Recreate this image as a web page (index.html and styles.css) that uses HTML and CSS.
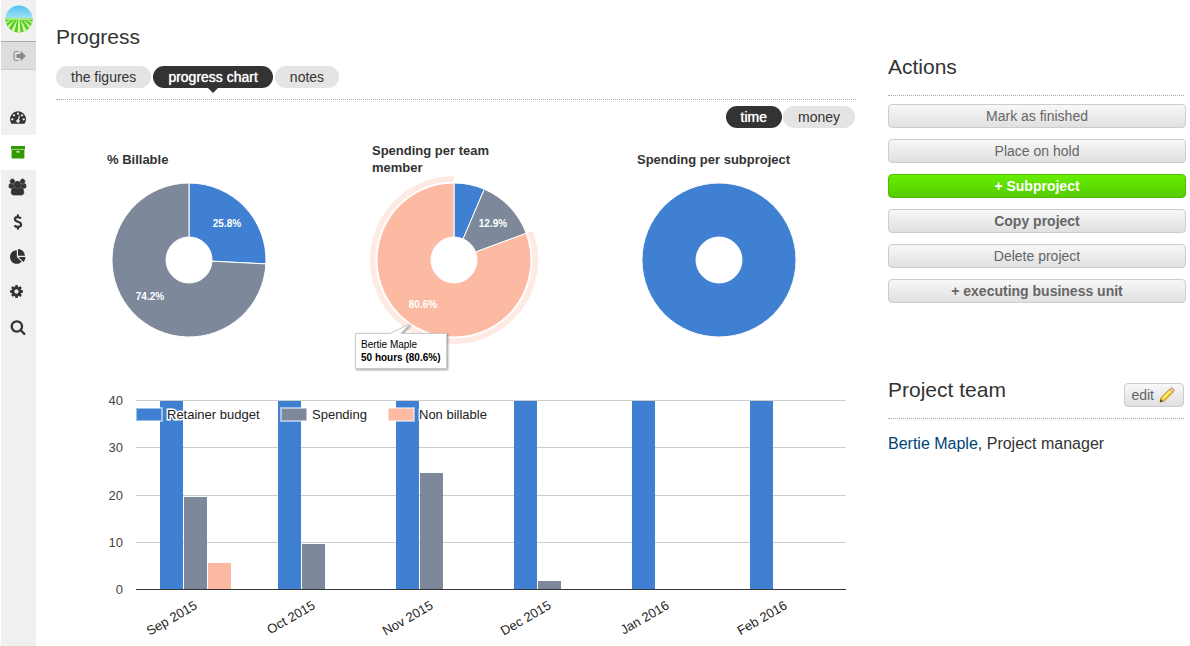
FILE: index.html
```html
<!DOCTYPE html>
<html lang="en">
<head>
<meta charset="utf-8">
<title>Progress</title>
<link rel="stylesheet" href="styles.css">
</head>
<body>
<div class="page">
  <nav class="sidebar" aria-label="Main">
    <a class="logo" href="#" aria-label="Home">
      <svg width="28" height="28" viewBox="0 0 28 28">
        <defs>
          <clipPath id="disc"><circle cx="14" cy="14" r="13.6"/></clipPath>
          <linearGradient id="sky" x1="0" y1="0" x2="0" y2="1"><stop offset="0" stop-color="#4fc3ef"/><stop offset="1" stop-color="#a5e3f6"/></linearGradient>
        </defs>
        <g clip-path="url(#disc)">
          <rect width="28" height="14" fill="url(#sky)"/>
          <rect y="13" width="28" height="15" fill="#4fd024"/>
          <path d="M0 13h28v2H0z" fill="#a9e67c"/>
          <g fill="#e0f6a8">
            <path d="M13.500 14 12.500 28h3L14.500 14z"/>
            <path d="M12.500 14 5 28h4z"/><path d="M15.500 14 19 28h4z"/>
            <path d="M10.500 14-2 25l3 2z"/><path d="M17.500 14 27 27l3-2z"/>
            <path d="M8 14-4 19v3z"/><path d="M20 14 32 19v3z"/>
          </g>
        </g>
      </svg>
    </a>
    <a class="exit" href="#" aria-label="Sign out">
      <svg width="14" height="14" viewBox="0 0 1792 1792"><path d="M704 1440q0 4 1 20t.5 26.500-3 23.500-10 19.500-20.500 6.500h-320q-119 0-203.500-84.500t-84.500-203.500v-704q0-119 84.500-203.500t203.500-84.500h320q13 0 22.500 9.500t9.500 22.500q0 4 1 20t.5 26.500-3 23.500-10 19.500-20.500 6.500h-320q-66 0-113 47t-47 113v704q0 66 47 113t113 47h312l11.500 1 11.500 3 8 5.500 7 9 2 13.500zm928-544q0 26-19 45l-544 544q-19 19-45 19t-45-19-19-45v-288h-448q-26 0-45-19t-19-45v-384q0-26 19-45t45-19h448v-288q0-26 19-45t45-19 45 19l544 544q19 19 19 45z"/></svg>
    </a>
    <div class="menu">
      <a href="#" aria-label="Dashboard"><svg width="16" height="16" viewBox="0 0 1792 1792"><path d="M384 1152q0-53-37.500-90.500t-90.500-37.500-90.500 37.500-37.500 90.500 37.500 90.500 90.500 37.500 90.500-37.500 37.500-90.500zm192-448q0-53-37.500-90.500t-90.500-37.500-90.500 37.500-37.500 90.500 37.500 90.500 90.500 37.500 90.500-37.500 37.500-90.500zm428 481l101-382q6-26-7.500-48.500t-38.500-29.500-48 6.500-30 39.500l-101 382q-60 5-107 43.500t-63 98.500q-20 77 20 146t117 89 146-20 89-117q16-60-6-117t-72-91zm660-33q0-53-37.500-90.500t-90.500-37.500-90.500 37.500-37.500 90.500 37.500 90.500 90.500 37.500 90.500-37.500 37.500-90.500zm-640-640q0-53-37.500-90.500t-90.500-37.500-90.500 37.500-37.500 90.500 37.500 90.500 90.500 37.500 90.500-37.500 37.500-90.500zm448 192q0-53-37.500-90.500t-90.500-37.500-90.500 37.500-37.500 90.500 37.500 90.500 90.500 37.500 90.500-37.500 37.500-90.500zm320 448q0 261-141 483-19 29-54 29h-1402q-35 0-54-29-141-221-141-483 0-182 71-348t191-286 286-191 348-71 348 71 286 191 191 286 71 348z"/></svg></a>
      <a class="current" href="#" aria-label="Projects"><svg width="16" height="16" viewBox="0 0 16 16"><path d="M1 2h14v3.500H1zM1.600 6h12.800v8.500H1.600zM6.500 7.300v1.200h3V7.300z" fill-rule="evenodd"/></svg></a>
      <a href="#" aria-label="Contacts"><svg class="heavy" width="17" height="16" viewBox="0 0 1920 1792"><path d="M593 896q-162 5-265 128h-134q-82 0-138-40.500t-56-118.500q0-353 124-353 6 0 43.500 21t97.500 42.500 119 21.500q67 0 133-23-5 37-5 66 0 139 81 256zm1071 637q0 120-73 189.500t-194 69.500h-874q-121 0-194-69.500t-73-189.500q0-53 3.500-103.500t14-109 26.500-108.500 43-97.500 62-81 85.500-53.500 111.500-20q10 0 43 21.500t73 48 107 48 135 21.500 135-21.500 107-48 73-48 43-21.500q61 0 111.500 20t85.500 53.500 62 81 43 97.500 26.500 108.500 14 109 3.500 103.500zm-1024-1277q0 106-75 181t-181 75-181-75-75-181 75-181 181-75 181 75 75 181zm704 384q0 159-112.500 271.500t-271.500 112.500-271.500-112.500-112.500-271.500 112.500-271.500 271.500-112.500 271.500 112.500 112.500 271.500zm576 225q0 78-56 118.500t-138 40.500h-134q-103-123-265-128 81-117 81-256 0-29-5-66 66 23 133 23 59 0 119-21.500t97.500-42.500 43.500-21q124 0 124 353zm-128-609q0 106-75 181t-181 75-181-75-75-181 75-181 181-75 181 75 75 181z"/></svg></a>
      <a href="#" aria-label="Invoices"><svg width="16" height="16" viewBox="0 0 16 16"><path d="M11 4.600C10 3.500 9 3.200 7.700 3.200 6 3.200 4.900 4 4.900 5.200c0 3.200 6.200 2 6.200 5.400 0 1.400-1.300 2.300-3.100 2.300-1.500 0-2.700-.5-3.600-1.500M7.900.6v2.600M7.900 12.900v2.500" fill="none" stroke="#333" stroke-width="2.200"/></svg></a>
      <a href="#" aria-label="Reports"><svg width="16" height="16" viewBox="0 0 1792 1792"><path d="M768 890l546 546q-106 108-247.500 168t-298.500 60q-209 0-385.500-103t-279.500-279.500-103-385.500 103-385.500 279.500-279.500 385.500-103v762zm187 6h773q0 157-60 298.500t-168 247.500zm709-128h-768v-768q209 0 385.500 103t279.500 279.500 103 385.500z"/></svg></a>
      <a class="settings" href="#" aria-label="Settings"><svg width="15" height="15" viewBox="0 0 1792 1792"><path d="M1152 896q0-106-75-181t-181-75-181 75-75 181 75 181 181 75 181-75 75-181zm512-109v222q0 12-8 23t-20 13l-185 28q-19 54-39 91 35 50 107 138 10 12 10 25t-9 23q-27 37-99 108t-94 71q-12 0-26-9l-138-108q-44 23-91 38-16 136-29 186-7 28-36 28h-222q-14 0-24.500-8.500t-11.500-21.500l-28-184q-49-16-90-37l-141 107q-10 9-25 9-14 0-25-11-126-114-165-168-7-10-7-23 0-12 8-23 15-21 51-66.500t54-70.500q-27-50-41-99l-183-27q-13-2-21-12.500t-8-23.500v-222q0-12 8-23t19-13l186-28q14-46 39-92-40-57-107-138-10-12-10-24 0-10 9-23 26-36 98.500-107.500t94.500-71.500q13 0 26 10l138 107q44-23 91-38 16-136 29-186 7-28 36-28h222q14 0 24.500 8.500t11.500 21.500l28 184q49 16 90 37l142-107q9-9 24-9 13 0 25 10 129 119 165 170 7 8 7 22 0 12-8 23-15 21-51 66.500t-54 70.500q26 50 41 98l183 28q13 2 21 12.500t8 23.500z"/></svg></a>
      <a href="#" aria-label="Search"><svg width="16" height="16" viewBox="0 0 1792 1792"><path d="M1216 832q0-185-131.500-316.500t-316.500-131.500-316.500 131.500-131.500 316.500 131.500 316.500 316.500 131.500 316.500-131.500 131.500-316.500zm512 832q0 52-38 90t-90 38q-54 0-90-38l-343-342q-179 124-399 124-143 0-273.500-55.500t-225-150-150-225-55.500-273.500 55.500-273.500 150-225 225-150 273.500-55.500 273.500 55.500 225 150 150 225 55.500 273.500q0 220-124 399l343 343q37 37 37 90z"/></svg></a>
    </div>
  </nav>

  <main class="main">
    <h1 class="title">Progress</h1>
    <div class="tabs">
      <button class="pill" type="button">the figures</button>
      <button class="pill active pointer" type="button">progress chart</button>
      <button class="pill" type="button">notes</button>
    </div>
    <div class="units">
      <button class="pill active" type="button">time</button>
      <button class="pill" type="button">money</button>
    </div>

    <div class="pies">
      <figure class="pie">
        <figcaption>% Billable</figcaption>
        <svg viewBox="0 0 265 196">
          <g class="slices">
            <path class="blue" d="M133 7A77 77 0 0 1 209.900 87.900L156 85.200A23 23 0 0 0 133 61z"/>
            <path class="grey" d="M209.900 87.900A77 77 0 1 1 133 7V61A23 23 0 1 0 156 85.200z"/>
          </g>
          <text class="share" x="171" y="51">25.8%</text>
          <text class="share" x="94" y="124">74.2%</text>
        </svg>
      </figure>
      <figure class="pie">
        <figcaption>Spending per team member</figcaption>
        <svg viewBox="0 0 265 196">
          <path class="halo" d="M211.800 54.900A84 84 0 1 1 133 0V5.500A78.500 78.500 0 1 0 206.600 56.800z"/>
          <g class="slices">
            <path class="blue" d="M133 7A77 77 0 0 1 163.300 13.200L142.100 62.900A23 23 0 0 0 133 61z"/>
            <path class="grey" d="M163.300 13.200A77 77 0 0 1 205.200 57.300L154.600 76A23 23 0 0 0 142.100 62.900z"/>
            <path class="peach" d="M205.200 57.300A77 77 0 1 1 133 7V61A23 23 0 1 0 154.600 76z"/>
          </g>
          <text class="share" x="172" y="51">12.9%</text>
          <text class="share" x="102" y="132">80.6%</text>
          <path class="tip" d="M34.500 157.500H69L89 148 80 157.500H125.500V192.500H34.500z"/>
          <text class="tip-name" x="40" y="172">Bertie Maple</text>
          <text class="tip-value" x="40" y="185">50 hours (80.6%)</text>
        </svg>
      </figure>
      <figure class="pie">
        <figcaption>Spending per subproject</figcaption>
        <svg viewBox="0 0 265 196">
          <g class="slices">
            <path class="blue" fill-rule="evenodd" d="M133 7a77 77 0 1 1 0 154a77 77 0 1 1 0-154zM133 61a23 23 0 1 0 0 46a23 23 0 1 0 0-46z"/>
          </g>
        </svg>
      </figure>
    </div>

    <svg class="bars" viewBox="0 0 800 274" role="img" aria-label="Hours per month">
      <g class="grid">
        <rect x="80" y="28" width="710" height="1"/><rect x="80" y="75" width="710" height="1"/>
        <rect x="80" y="123" width="710" height="1"/><rect x="80" y="170" width="710" height="1"/>
      </g>
      <g class="blue">
        <rect x="104" y="29" width="23" height="188"/><rect x="222" y="29" width="23" height="188"/>
        <rect x="340" y="29" width="23" height="188"/><rect x="458" y="29" width="23" height="188"/>
        <rect x="576" y="29" width="23" height="188"/><rect x="694" y="29" width="23" height="188"/>
      </g>
      <g class="grey">
        <rect x="128" y="125" width="23" height="92"/><rect x="246" y="172" width="23" height="45"/>
        <rect x="364" y="101" width="23" height="116"/><rect x="482" y="209" width="23" height="8"/>
      </g>
      <rect class="peach" x="152" y="191" width="23" height="26"/>
      <rect class="base" x="80" y="217" width="710" height="1"/>
      <g class="scale">
        <text x="67" y="33">40</text><text x="67" y="80">30</text><text x="67" y="128">20</text><text x="67" y="175">10</text><text x="67" y="222">0</text>
      </g>
      <g class="months">
        <text transform="translate(142 236) rotate(-30)">Sep 2015</text>
        <text transform="translate(260 236) rotate(-30)">Oct 2015</text>
        <text transform="translate(378 236) rotate(-30)">Nov 2015</text>
        <text transform="translate(496 236) rotate(-30)">Dec 2015</text>
        <text transform="translate(614 236) rotate(-30)">Jan 2016</text>
        <text transform="translate(732 236) rotate(-30)">Feb 2016</text>
      </g>
      <g class="swatches">
        <rect class="blue" x="80" y="36" width="26" height="13"/>
        <rect class="grey" x="225" y="36" width="26" height="13"/>
        <rect class="peach" x="332" y="36" width="26" height="13"/>
      </g>
      <g class="legend">
        <text x="111" y="47">Retainer budget</text><text x="256" y="47">Spending</text><text x="363" y="47">Non billable</text>
      </g>
    </svg>
  </main>

  <aside class="side">
    <section class="panel">
      <div class="panel-head"><h2 class="title">Actions</h2></div>
      <div class="actions">
        <button class="btn" type="button">Mark as finished</button>
        <button class="btn" type="button">Place on hold</button>
        <button class="btn primary" type="button">+ Subproject</button>
        <button class="btn strong" type="button">Copy project</button>
        <button class="btn" type="button">Delete project</button>
        <button class="btn strong" type="button">+ executing business unit</button>
      </div>
    </section>
    <section class="panel">
      <div class="panel-head">
        <h2 class="title">Project team</h2>
        <button class="btn edit" type="button">edit
          <svg width="16" height="16" viewBox="0 0 16 16">
            <path d="M1 15 2.200 10.600 11.200 1.600Q12.500.5 14 2T14.400 4.800L5.400 13.800z" fill="#f5cf3a" stroke="#b5821c" stroke-width="1"/>
            <path d="M3.600 10.600 11.400 2.800 12.600 4 4.800 11.800z" fill="#fff080"/>
            <path d="M10.400 2.400 11.700 1.100Q13 .5 14.300 1.700T14.900 4.300L13.600 5.600z" fill="#f2c4a0" stroke="#b98058" stroke-width=".7"/>
            <path d="M1 15 1.700 12.200 3.800 14.300z" fill="#333"/>
          </svg>
        </button>
      </div>
      <p class="member"><a href="#">Bertie Maple</a>, Project manager</p>
    </section>
  </aside>
</div>
</body>
</html>
```

FILE: styles.css
```css
* { box-sizing: border-box; }
body {
  margin: 0;
  background: #fff;
  color: #333;
  font-family: "Liberation Sans", Arial, Helvetica, sans-serif;
  font-size: 14px;
}
button { font: inherit; color: inherit; border: 0; margin: 0; cursor: pointer; }
svg { display: block; }

.page { display: flex; min-height: 100vh; padding: 0 4px 0 1px; }

.sidebar { flex: 0 0 35px; margin-right: 20px; background: #f0f0f0; }
.sidebar a { display: flex; align-items: center; justify-content: center; fill: #333; }
.sidebar .logo { height: 41px; padding-bottom: 4px; }
.sidebar .exit {
  height: 29px;
  padding-left: 2px;
  background: #ddd;
  border-top: 1px solid #aaa;
  border-bottom: 1px solid #ccc;
  fill: #888;
}
.menu { padding-top: 30px; }
.menu a { height: 35px; padding: 0 2px 2px 0; }
.menu .settings { padding-right: 4px; }
.sidebar .current { background: #fff; fill: #390; }
.heavy { stroke: #333; stroke-width: 90; overflow: visible; }

.main { flex: 1; min-width: 0; padding-top: 24px; }
.title { margin: 0; font-size: 21px; line-height: 26px; font-weight: 400; }

.tabs {
  display: flex;
  gap: 2px;
  padding: 16px 0 11px;
  border-bottom: 1px dotted #aaa;
}
.units { display: flex; justify-content: flex-end; gap: 1px; padding: 6px 1px 0 0; }
.pill {
  position: relative;
  height: 22px;
  padding: 0 15px;
  border-radius: 11px;
  background: #e4e4e4;
  line-height: 22px;
}
.pill.active { background: #333; color: #fff; text-shadow: 0 0 1px #fff; }
.pointer::after {
  content: "";
  position: absolute;
  top: 100%;
  left: 50%;
  margin-left: -5px;
  border: 5px solid transparent;
  border-top-color: #333;
  border-bottom: 0;
}

.pies { display: grid; grid-template-columns: repeat(3, 1fr); margin-right: 5px; padding-top: 14px; }
.pie { margin: 0; }
.pie svg { width: 100%; overflow: visible; }
.pie figcaption {
  display: flex;
  align-items: center;
  height: 34px;
  padding: 0 60px 0 51px;
  font-size: 13px;
  line-height: 17px;
  font-weight: 700;
}
.bars { width: 100%; }

.blue { fill: #3f80d2; }
.grey { fill: #7d899a; }
.peach { fill: #fcbaa3; }
.halo { fill: #fee9e3; }
.slices { stroke: #fff; stroke-width: 1px; }
.share { fill: #fff; font-size: 10px; font-weight: 700; text-anchor: middle; }
.tip { fill: #fff; stroke: #ccc; filter: drop-shadow(1px 1px 1px rgba(0, 0, 0, .4)); }
.tip-name, .tip-value { fill: #000; font-size: 10px; }
.tip-value { font-weight: 700; }
.grid { fill: #ccc; }
.base { fill: #333; }
.scale, .months, .legend { font-size: 13px; }
.scale { fill: #444; text-anchor: end; }
.months { fill: #222; text-anchor: end; }
.swatches { stroke: #fff; stroke-opacity: .5; stroke-width: 2px; }
.legend { fill: #222; stroke: #fff; stroke-width: 3px; paint-order: stroke; }

.side { flex: 0 0 298px; margin-left: 32px; padding-top: 54px; }
.panel + .panel { margin-top: 74px; }
.panel-head {
  display: flex;
  align-items: flex-end;
  justify-content: space-between;
  margin-right: 2px;
  border-bottom: 1px dotted #aaa;
}
.panel-head .title { padding-bottom: 15px; }
.actions { display: grid; gap: 11px; padding-top: 8px; }
.btn {
  height: 24px;
  padding: 0 5px;
  border: 1px solid #ccc;
  border-radius: 4px;
  background: linear-gradient(#f8f8f8, #e0e0e0);
  color: #666;
  line-height: 22px;
}
.btn.strong { font-weight: 700; }
.btn.primary {
  border-color: #5b0;
  background: linear-gradient(#6e0, #5c0);
  color: #fff;
  font-weight: 700;
}
.btn.edit { display: flex; align-items: center; gap: 5px; margin-bottom: 11px; padding: 0 8px 0 6px; }
.member { margin: 15px 0 0; font-size: 16px; line-height: 20px; }
.member a { color: #047; text-decoration: none; }
```
